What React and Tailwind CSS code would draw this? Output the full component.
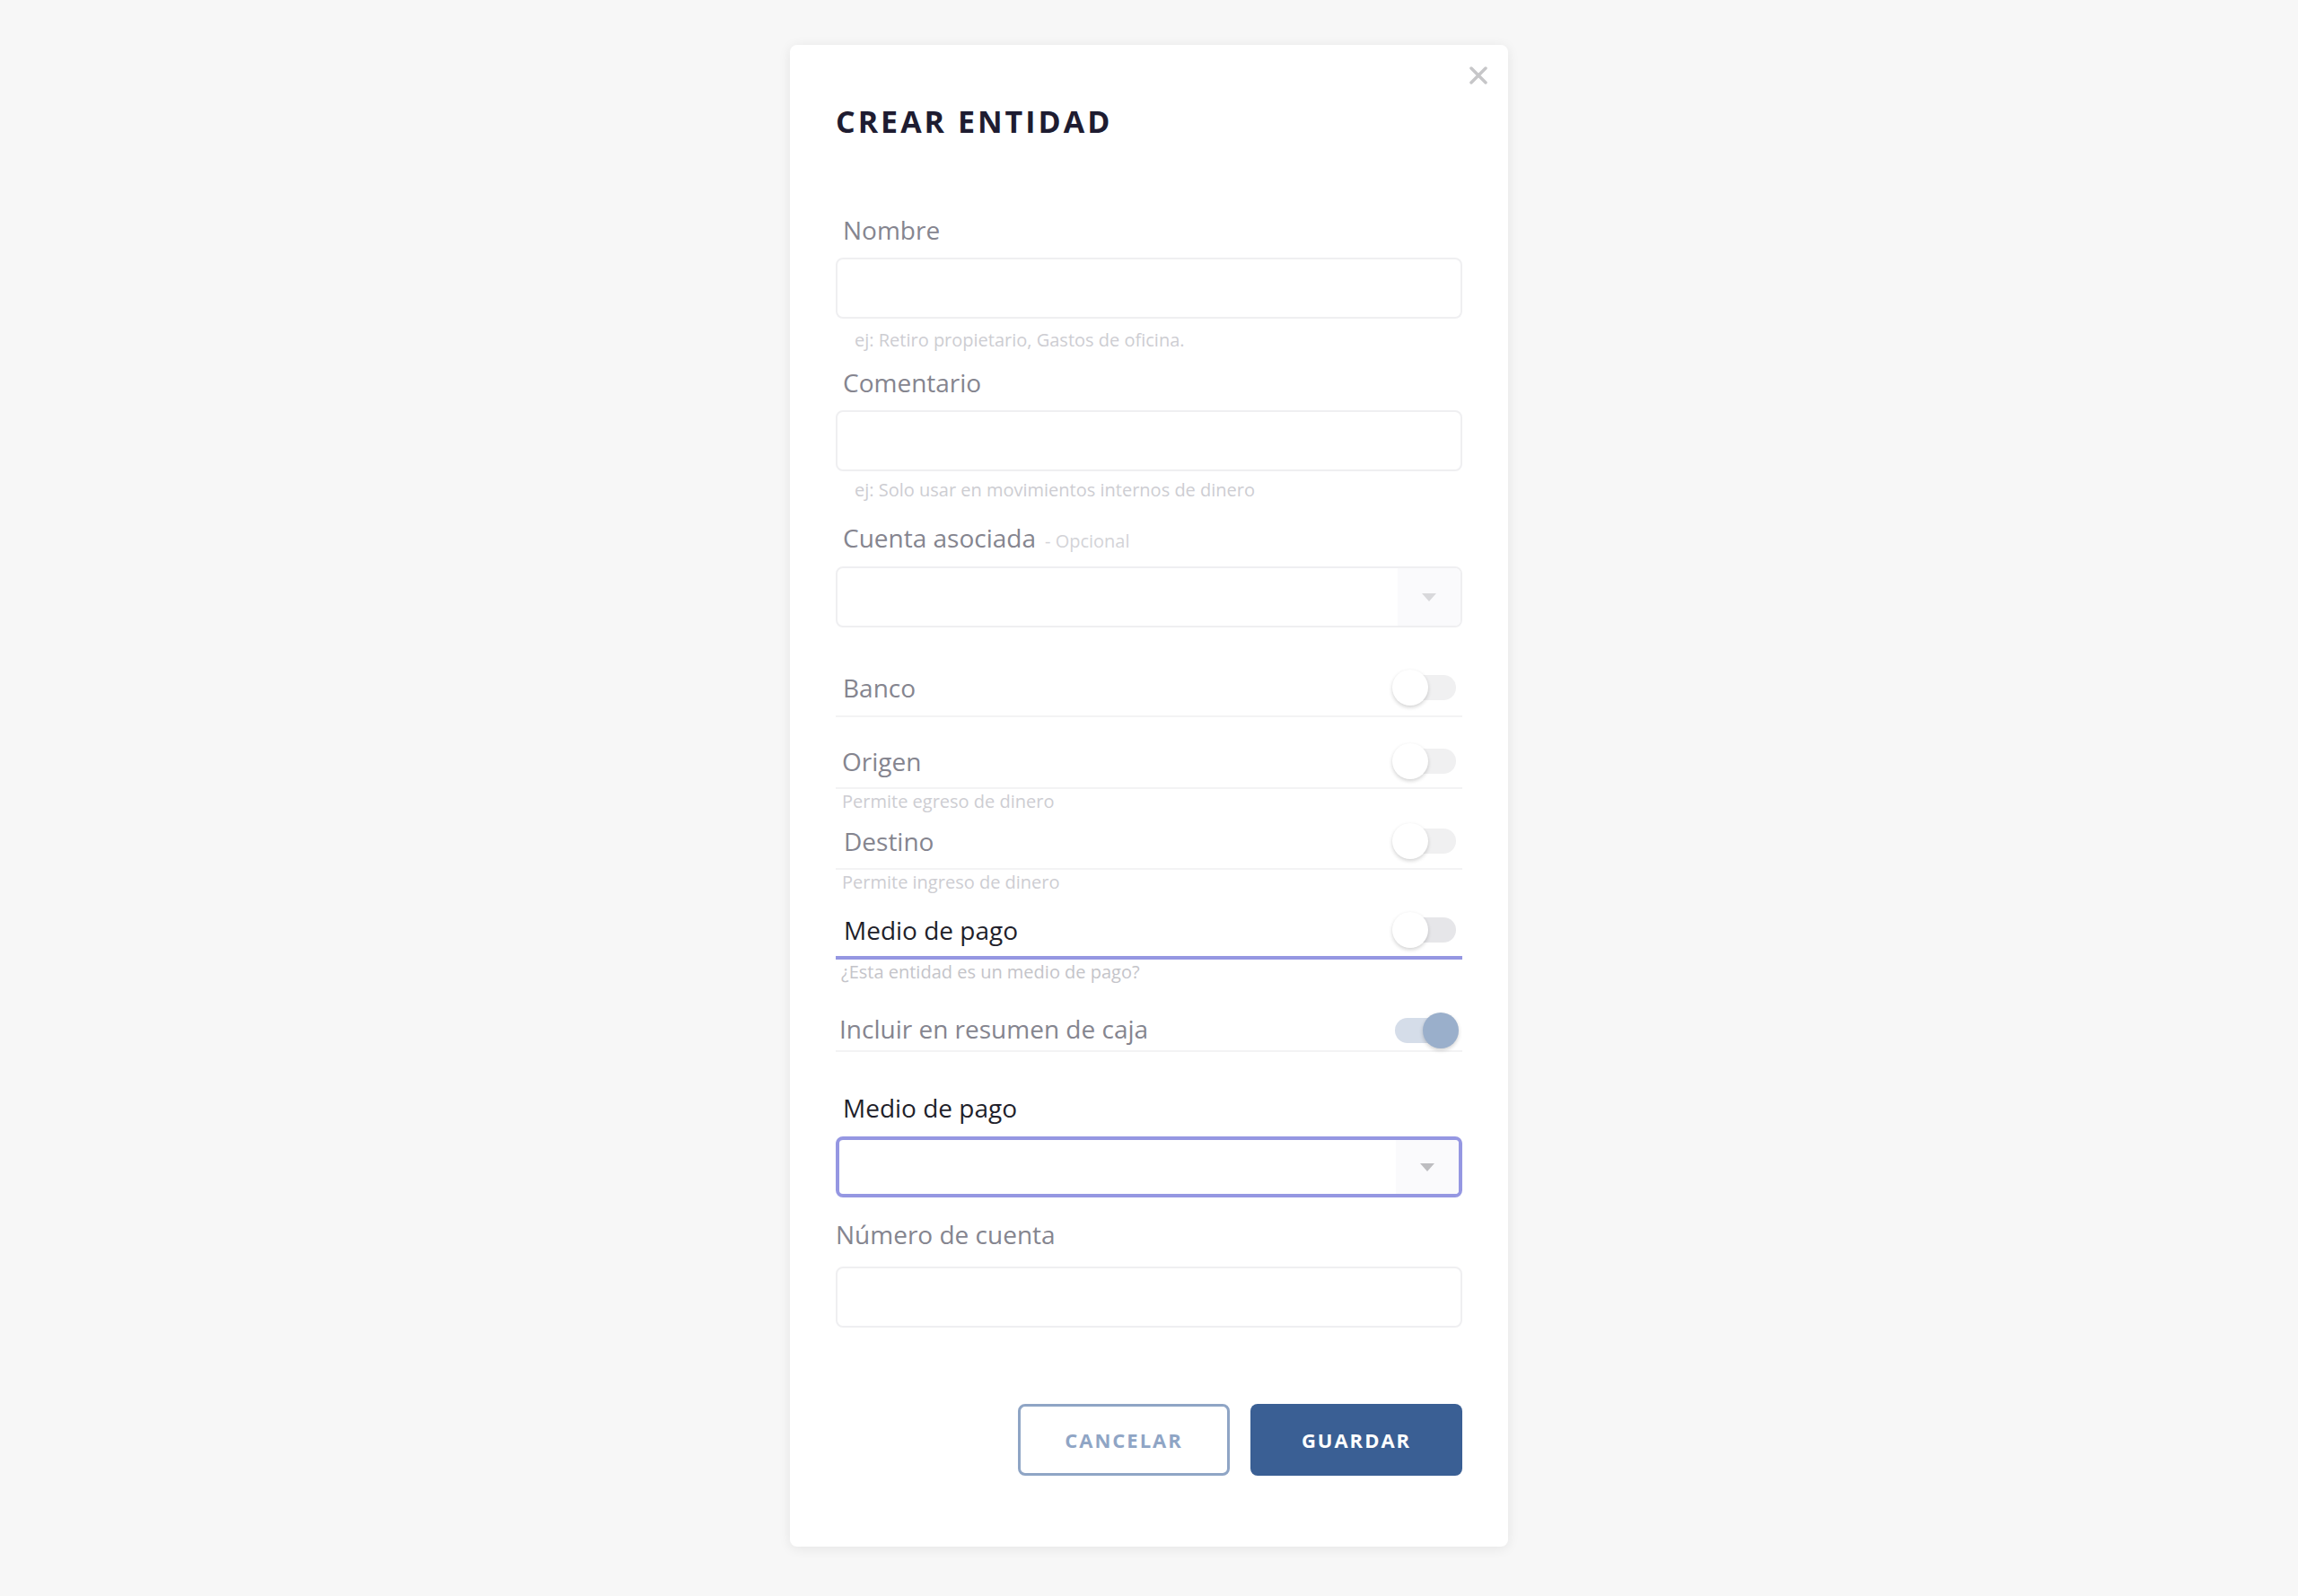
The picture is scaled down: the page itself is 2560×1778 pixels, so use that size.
import React from 'react';

// Form labels and helpers
function Label({ children, className = '', dark = false }) {
  return (
    <div
      className={`pl-[8px] text-[28px] leading-[28px] ${
        dark ? 'text-[#1f1f2b]' : 'text-[#85858f]'
      } ${className}`}
    >
      {children}
    </div>
  );
}

function Helper({ children, className = '' }) {
  return <div className={`text-[20px] leading-[20px] ${className}`}>{children}</div>;
}

function TextInput({ className = '' }) {
  return (
    <div className={`h-[68px] rounded-lg border-2 border-[#efeff1] bg-white ${className}`} />
  );
}

function SelectBox({ focused = false, className = '' }) {
  return (
    <div
      className={`flex h-[68px] overflow-hidden rounded-lg bg-white ${
        focused ? 'border-[4px] border-[#9597e2]' : 'border-2 border-[#efeff1]'
      } ${className}`}
    >
      <div className="flex-1" />
      <div className="flex w-[70px] items-center justify-center bg-[#fafafc]">
        <svg width="16" height="9" viewBox="0 0 16 9">
          <path d="M0 0 L16 0 L8 9 Z" fill={focused ? '#bdbdc0' : '#d8d8db'} />
        </svg>
      </div>
    </div>
  );
}

function Toggle({ on = false, dark = false }) {
  return (
    <div className="relative mr-[4px] h-[40px] w-[74px] shrink-0">
      <div
        className={`absolute left-[3px] right-[3px] top-[6px] h-[28px] rounded-full ${
          on ? 'bg-[#d5dde9]' : dark ? 'bg-[#e6e6e9]' : 'bg-[#f0f0f1]'
        }`}
      />
      <div
        className={`absolute top-0 h-[40px] w-[40px] rounded-full shadow-[0_2px_4px_rgba(0,0,0,0.18)] ${
          on ? 'right-0 bg-[#9aafcb]' : 'left-0 bg-white'
        }`}
      />
    </div>
  );
}

function SwitchRow({ label, on, dark, height, active = false, className = '', labelClass = '' }) {
  return (
    <div
      className={`flex items-center justify-between ${height} ${
        active ? 'border-b-4 border-[#9597e2]' : 'border-b-2 border-[#f3f3f4]'
      } ${className}`}
    >
      <div
        className={`text-[28px] leading-[28px] ${
          active ? 'text-[#1f1f2b]' : 'text-[#85858f]'
        } ${labelClass}`}
      >
        {label}
      </div>
      <Toggle on={on} dark={dark} />
    </div>
  );
}

export default function App() {
  return (
    <div className="flex min-h-screen justify-center bg-[#f7f7f7] pt-[50px] font-['Open_Sans',sans-serif]">
      <div className="relative h-fit w-[800px] rounded-lg bg-white px-[51px] pb-[79px] pt-[68px] shadow-[0_2px_14px_rgba(0,0,0,0.08)]">
        {/* close */}
        <button className="absolute right-[23px] top-[24px]">
          <svg width="20" height="20" viewBox="0 0 20 20">
            <path d="M2 2 L18 18 M18 2 L2 18" stroke="#c6c6c8" strokeWidth="3.5" strokeLinecap="round" />
          </svg>
        </button>

        <h1 className="text-[34px] font-bold leading-[34px] tracking-[3px] text-[#1e1c31]">
          CREAR ENTIDAD
        </h1>

        <Label className="mt-[90px]">Nombre</Label>
        <TextInput className="mt-[17px]" />
        <Helper className="mt-[14px] pl-[21px] text-[#cdcdd2]">
          ej: Retiro propietario, Gastos de oficina.
        </Helper>

        <Label className="mt-[23px]">Comentario</Label>
        <TextInput className="mt-[17px]" />
        <Helper className="mt-[11px] pl-[21px] text-[#cdcdd2]">
          ej: Solo usar en movimientos internos de dinero
        </Helper>

        <Label className="mt-[29px] flex items-baseline">
          Cuenta asociada
          <span className="ml-[10px] text-[20px] leading-[20px] text-[#d3d3d7]">- Opcional</span>
        </Label>
        <SelectBox className="mt-[18px]" />

        <SwitchRow label="Banco" height="h-[64px]" className="mt-[36px]" labelClass="pl-[8px]" />
        <SwitchRow label="Origen" height="h-[60px]" className="mt-[20px]" labelClass="pl-[7px]" />
        <Helper className="mt-[4px] pl-[7px] text-[#cdcdd2]">Permite egreso de dinero</Helper>
        <SwitchRow label="Destino" height="h-[62px]" className="mt-[4px]" labelClass="pl-[9px]" />
        <Helper className="mt-[4px] pl-[7px] text-[#cdcdd2]">Permite ingreso de dinero</Helper>
        <SwitchRow
          label="Medio de pago"
          height="h-[62px]"
          active
          dark
          className="mt-[14px]"
          labelClass="pl-[9px]"
        />
        <Helper className="mt-[4px] pl-[6px] text-[#c4c4c9]">¿Esta entidad es un medio de pago?</Helper>
        <SwitchRow
          label="Incluir en resumen de caja"
          height="h-[46px]"
          on
          className="mt-[33px]"
          labelClass="pl-[4px] pb-[5px]"
        />

        <Label dark className="mt-[48px]">
          Medio de pago
        </Label>
        <SelectBox focused className="mt-[18px]" />

        <div className="mt-[27px] text-[28px] leading-[28px] text-[#85858f]">Número de cuenta</div>
        <TextInput className="mt-[22px]" />

        <div className="mt-[85px] flex justify-end gap-[23px]">
          <button className="h-[80px] w-[236px] rounded-lg border-[3px] border-[#8fa5c5] bg-white text-[22px] font-bold tracking-[2px] text-[#8fa5c5]">
            CANCELAR
          </button>
          <button className="h-[80px] w-[236px] rounded-lg bg-[#3a5f94] text-[22px] font-bold tracking-[2px] text-white">
            GUARDAR
          </button>
        </div>
      </div>
    </div>
  );
}
